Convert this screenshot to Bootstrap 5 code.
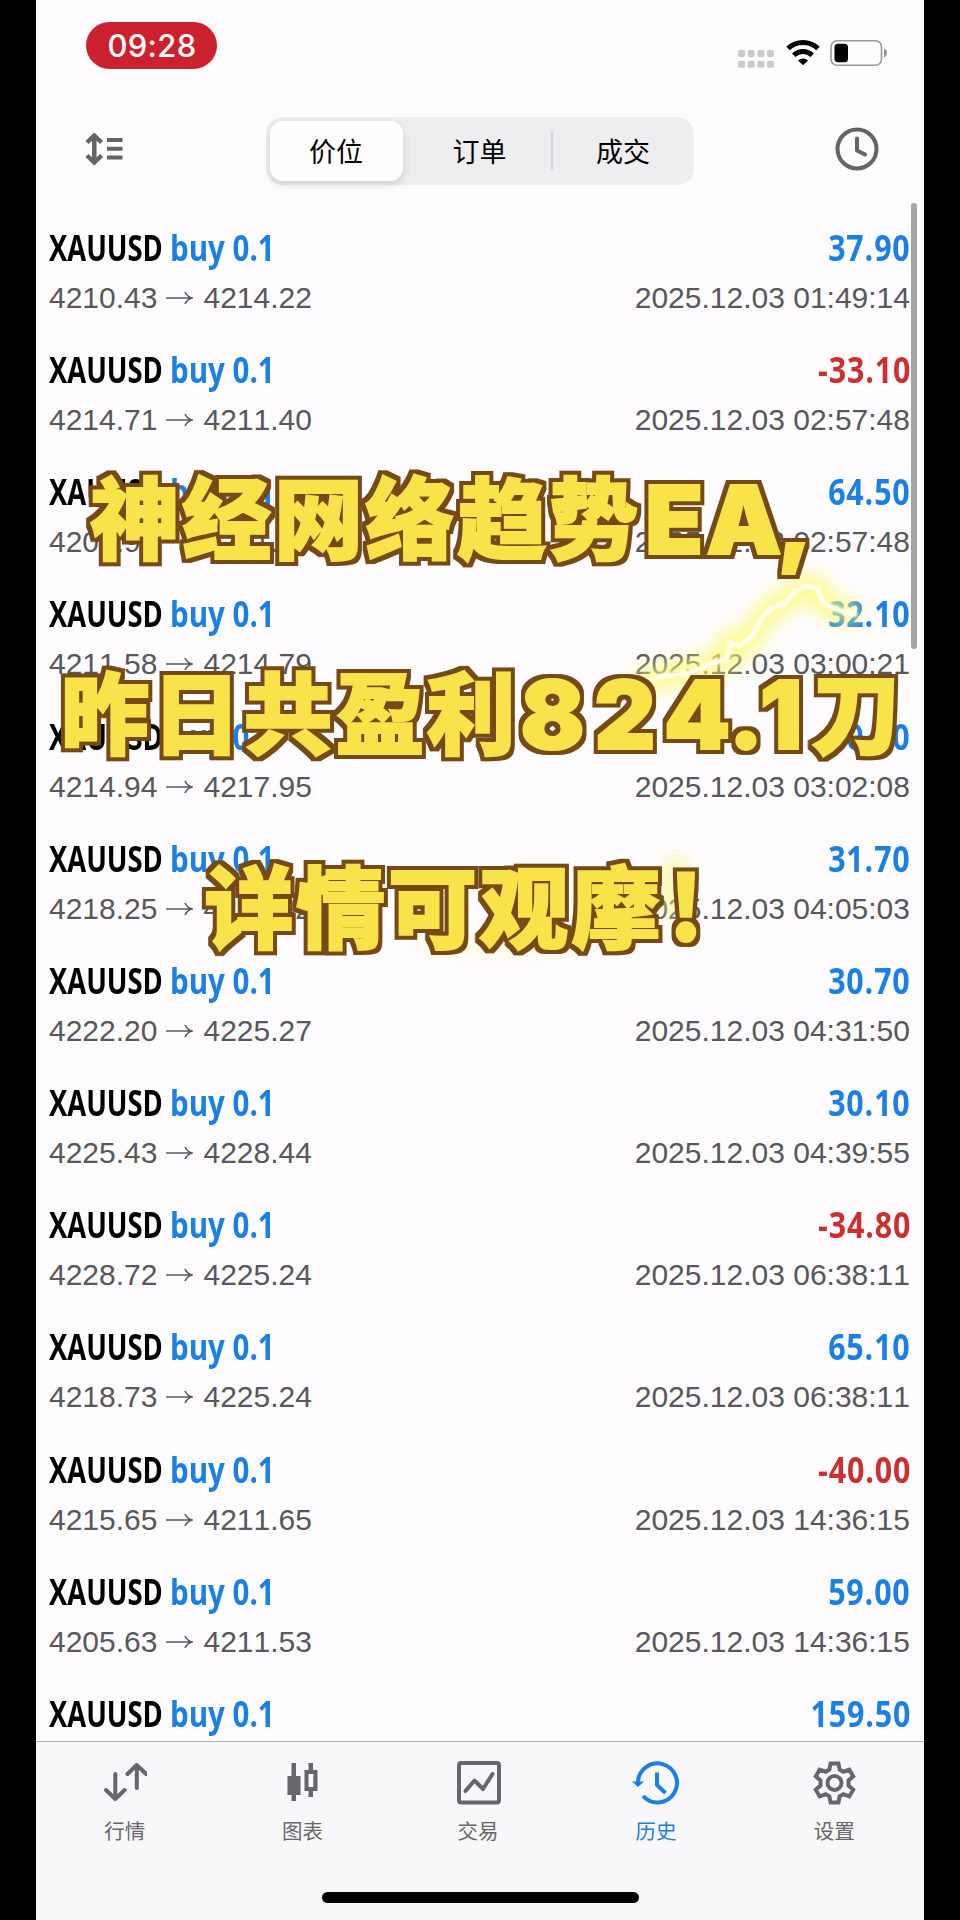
<!DOCTYPE html>
<html lang="zh-CN">
<head>
<meta charset="utf-8">
<meta name="viewport" content="width=device-width, initial-scale=1">
<title>历史</title>
<link href="https://cdn.jsdelivr.net/npm/bootstrap@5.3.0/dist/css/bootstrap.min.css" rel="stylesheet">
<style>
body{background:#000;font-family:"Liberation Sans","Noto Sans CJK SC",sans-serif;height:1920px;overflow:hidden}
.phone{width:888px;height:1920px;background:#fefcfe}
.status{height:92px;padding:22px 36px 0 50px}
.clock-pill{width:131px;height:47px;background:#cb202e;color:#fff;font:500 31px/48px Inter,sans-serif;padding-left:1px;letter-spacing:.3px}
.topbar{height:111px;padding:25px 45px 0 49px}
.seg{width:428px;height:68px;background:#eeedf0;border-radius:17px;padding:4px;margin-left:1px}
.seg button{border:0;background:none;font:400 27px/56px "Noto Sans CJK SC",sans-serif;color:#000;padding:2px 0}
.seg .on{background:#fefdff;border-radius:13px;box-shadow:0 4px 10px rgba(0,0,0,.12)}
.seg i{width:2px;height:38px;background:#d4d3d7}
.deals{height:1538px;overflow:hidden;padding:14px 14px 0 13px}
.deal{height:122.17px}
.ttl{height:62px;font:700 36px/62px "Open Sans",sans-serif}
.ttl span{display:inline-block;white-space:nowrap;transform-origin:0 50%}
.sym{width:121px;color:#000}
.buy{color:#1b7fe3}
.ttl .amt{transform-origin:100% 50%;color:#1b7fe3;letter-spacing:1px;margin-right:-1px}
.ttl .loss{color:#c9302f}
.sub{font-size:30px;line-height:40px;color:#58575b;margin-top:-1px;font-kerning:none}
.sub svg{margin:0 10px 0 9px}
.thumb{left:875px;top:203px;width:6px;height:446px;background:#a6a4a8}
.tabs{height:179px;background:#f8f7fa;border-top:1px solid #b4b3b1}
.tab{color:#68666a;padding-top:19px}
.tab.cur{color:#1b7fe3}
.tab small{font:400 20.5px/30px "Noto Sans CJK SC",sans-serif;margin-top:10px}
.home{left:286px;top:1892px;width:317px;height:11px;background:#000}
.cap{left:0;top:0;pointer-events:none}
.caption{filter:url(#outline)}
.caption text{fill:#f9e34b;stroke:#f9e34b;stroke-width:2px;stroke-linejoin:miter;text-anchor:middle;font:900 89px "Noto Sans CJK SC",sans-serif}
.caption .lat{font-family:Inter,"Noto Sans CJK SC",sans-serif;font-size:95px}
</style>
</head>
<body>
<main class="phone position-relative mx-auto d-flex flex-column">
  <header class="status d-flex justify-content-between align-items-start">
    <div class="clock-pill rounded-pill text-center">09:28</div>
    <svg width="152" height="30" viewBox="736 38 152 30" style="margin-top:16px" aria-hidden="true">
      <g fill="#ccc9cd"><rect x="738" y="50" width="7" height="7" rx="2"/><rect x="747.7" y="50" width="7" height="7" rx="2"/><rect x="757.4" y="50" width="7" height="7" rx="2"/><rect x="767" y="50" width="7" height="7" rx="2"/><rect x="738" y="60.7" width="7" height="7" rx="2"/><rect x="747.7" y="60.7" width="7" height="7" rx="2"/><rect x="757.4" y="60.7" width="7" height="7" rx="2"/><rect x="767" y="60.7" width="7" height="7" rx="2"/></g>
      <path d="M788 48.5a21.5 21.5 0 0 1 30 0M793.8 55.3a13 13 0 0 1 18.400 0" fill="none" stroke="#000" stroke-width="5"/>
      <path d="M803 65.300l-5-4.800a7 7 0 0 1 10 0z"/>
      <rect x="831" y="40.800" width="50.500" height="24.500" rx="6" fill="none" stroke="#99979a" stroke-width="1.600"/>
      <rect x="834.500" y="43.700" width="13.500" height="18.500" rx="3.500"/>
      <path d="M884 48.500q3 1.500 3 4.500t-3 4.500z" fill="#99979a"/>
    </svg>
  </header>
  <nav class="topbar d-flex justify-content-between align-items-start">
    <svg width="38" height="34" viewBox="0 0 38 34" style="margin-top:15px" fill="none" stroke="#656366" stroke-width="4.500"><path d="M9.300 4v26M2 10.500l7.300-7 7.300 7M2 23.500l7.300 7 7.300-7"/><path d="M22 8h15.500M22 16.800h15.500M22 25.500h15.500" stroke-width="4"/></svg>
    <div class="seg d-flex align-items-center">
      <button class="on" style="width:133px">价位</button><button style="width:148px;padding-left:6px">订单</button><i></i><button class="flex-fill ps-1">成交</button>
    </div>
    <svg width="44" height="44" viewBox="0 0 44 44" style="margin-top:10px" fill="none" stroke="#656366" stroke-width="4"><circle cx="22" cy="22" r="19.500"/><path d="M22 11.500V23.500l8 4" stroke-linecap="round" stroke-linejoin="round"/></svg>
  </nav>
  <section class="deals" id="deals"></section>
  <div class="thumb position-absolute rounded-pill"></div>
  <footer class="tabs d-flex">
    <div class="tab col d-flex flex-column align-items-center"><svg width="44" height="44" fill="none" stroke="currentColor" stroke-width="4" stroke-linecap="round" stroke-linejoin="round"><path d="M12.300 13v24M3 29l9.300 9 9.300-9M33.800 27V4M24.500 13l9.300-9 9.300 9"/></svg><small>行情</small></div>
    <div class="tab col d-flex flex-column align-items-center"><svg width="44" height="44" fill="currentColor"><path d="M11.500 2h4.500v13h4.500v19H16v6h-4.500v-6h-4V15h4zM28.500 2H33v7h4.500v21H33v6h-4.500v-6H24.500V9h4zM28.500 13v13H33.300V13z" fill-rule="evenodd"/></svg><small>图表</small></div>
    <div class="tab col d-flex flex-column align-items-center"><svg width="46" height="44" viewBox="0 0 46 44" fill="none" stroke="currentColor" stroke-width="4" stroke-linejoin="round"><rect x="2" y="2" width="40" height="39.500" rx="2"/><path d="M8.500 30l9-10.500L26 28l9.500-15" stroke-linecap="round"/></svg><small style="margin-right:4px">交易</small></div>
    <div class="tab cur col d-flex flex-column align-items-center"><svg width="53" height="44" viewBox="0 0 53 44" fill="none" stroke="currentColor" stroke-width="4"><path d="M7 21.500A19.500 19.500 0 1 1 12 35"/><path d="M26 11.500V24l8.500 8"/><path d="M1 20.500h12l-6 5.500z" fill="currentColor" stroke="none"/></svg><small style="margin-right:3px">历史</small></div>
    <div class="tab col d-flex flex-column align-items-center"><svg width="44" height="44" fill="none" stroke="currentColor" stroke-width="4"><circle cx="21.500" cy="22" r="7"/><path d="M17.600 2.500h7.800l1.300 6.200 3.600 2 6-2.100 3.900 6.700-4.700 4.200v5l4.700 4.200-3.900 6.700-6-2.100-3.600 2-1.300 6.200h-7.800l-1.300-6.200-3.600-2-6 2.100-3.900-6.700 4.700-4.200v-5l-4.700-4.200 3.900-6.700 6 2.100 3.600-2z"/></svg><small style="margin-right:2px">设置</small></div>
  </footer>
  <div class="home position-absolute rounded-pill"></div>

  <svg class="cap position-absolute" width="888" height="1100" viewBox="36 0 888 1100">
    <defs>
      <filter id="glow" x="-30%" y="-60%" width="160%" height="220%"><feGaussianBlur stdDeviation="9"/></filter>
      <filter id="soft" x="-20%" y="-20%" width="140%" height="140%"><feGaussianBlur stdDeviation="1.200"/></filter>
      <filter id="outline" x="-5%" y="-5%" width="110%" height="110%" color-interpolation-filters="sRGB">
        <feMorphology in="SourceAlpha" operator="dilate" radius="3.500" result="fat"/>
        <feFlood flood-color="#754a15"/>
        <feComposite in2="fat" operator="in" result="edge"/>
        <feMerge><feMergeNode in="edge"/><feMergeNode in="SourceGraphic"/></feMerge>
      </filter>
      <path id="bolt" d="M636 686l26-10 31-4 16-8 18-5 3-16 10 3 12-10 11-19 9-9 13-5 10-12 11-5 11 2 6 14 12 7 22 6"/>
    </defs>
    <use href="#bolt" fill="none" stroke="#fbf96a" stroke-width="24" opacity=".75" filter="url(#glow)"/>
    <use href="#bolt" fill="none" stroke="#fffff0" stroke-width="5" filter="url(#soft)"/>
    <g fill="#f6f680" filter="url(#glow)"><ellipse cx="675" cy="888" rx="15" ry="34" opacity=".6"/><ellipse cx="500" cy="946" rx="90" ry="10" opacity=".25"/></g>
    <g class="caption">
      <text y="552" x="135 226.700 318.500 410 502 593.500 674 744 795">神经网络趋势<tspan class="lat" dy="2">EA,</tspan></text>
      <text y="747" x="105 196.600 288 380 471 552.500 625 697 746 781 856">昨日共盈利<tspan class="lat" dy="2">824.1</tspan><tspan dy="-2">刀</tspan></text>
      <text y="941" x="249 340.700 432.500 524 616 686">详情可观摩!</text>
    </g>
  </svg>
</main>
<script>
const deals = [
  ['37.90','4210.43','4214.22','01:49:14'],
  ['-33.10','4214.71','4211.40','02:57:48'],
  ['64.50','4204.95','4211.40','02:57:48'],
  ['32.10','4211.58','4214.79','03:00:21'],
  ['30.10','4214.94','4217.95','03:02:08'],
  ['31.70','4218.25','4221.42','04:05:03'],
  ['30.70','4222.20','4225.27','04:31:50'],
  ['30.10','4225.43','4228.44','04:39:55'],
  ['-34.80','4228.72','4225.24','06:38:11'],
  ['65.10','4218.73','4225.24','06:38:11'],
  ['-40.00','4215.65','4211.65','14:36:15'],
  ['59.00','4205.63','4211.53','14:36:15'],
  ['159.50','','','']
];
const arrow = '<svg width="27" height="16" viewBox="0 0 27 16" fill="none" stroke="#58575b" stroke-width="1.600"><path d="M0 8h26M19 2q2 4.500 7 6-5 1.500-7 6"/></svg>';
document.getElementById('deals').innerHTML = deals.map(([amt, a, b, t]) => `
  <div class="deal">
    <div class="ttl d-flex"><span class="sym"><span style="transform:scaleX(.76)">XAUUSD</span></span><span class="buy" style="transform:scaleX(.82)">buy 0.1</span><span class="amt ms-auto${amt[0]==='-'?' loss':''}" style="transform:scaleX(.845)">${amt}</span></div>
    ${a ? `<div class="sub d-flex align-items-center"><span>${a}</span>${arrow}<span>${b}</span><span class="ms-auto">2025.12.03 ${t}</span></div>` : ''}
  </div>`).join('');
</script>
<script src="https://cdn.jsdelivr.net/npm/bootstrap@5.3.0/dist/js/bootstrap.bundle.min.js"></script>
</body>
</html>
